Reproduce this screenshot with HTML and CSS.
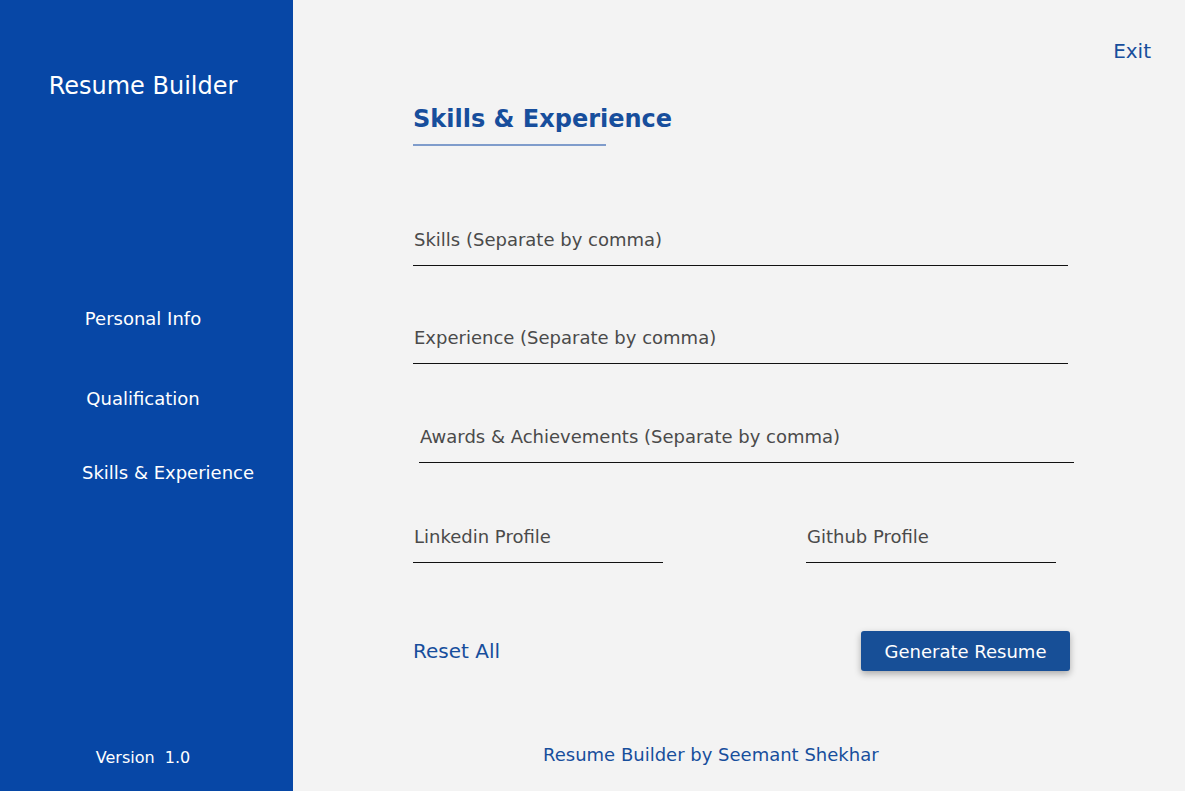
FILE: index.html
```html
<!DOCTYPE html>
<html lang="en">
<head>
<meta charset="utf-8">
<title>Resume Builder</title>
<link rel="stylesheet" href="styles.css">
</head>
<body>
<div class="app">
  <aside class="sidebar">
    <div class="brand">Resume Builder</div>
    <nav class="nav">
      <a class="nav-item nav-personal">Personal Info</a>
      <a class="nav-item nav-qual">Qualification</a>
      <a class="nav-item nav-skills">Skills &amp; Experience</a>
    </nav>
    <div class="version">Version&nbsp; 1.0</div>
  </aside>
  <main class="main">
    <div class="topbar"><a class="exit">Exit</a></div>
    <section class="content">
      <h1 class="heading">Skills &amp; Experience</h1>
      <div class="field field-wide field-first"><span class="label">Skills (Separate by comma)</span></div>
      <div class="field field-wide field-second"><span class="label">Experience (Separate by comma)</span></div>
      <div class="field field-wide field-shift"><span class="label">Awards &amp; Achievements (Separate by comma)</span></div>
      <div class="field-row">
        <div class="field field-half"><span class="label">Linkedin Profile</span></div>
        <div class="field field-half"><span class="label">Github Profile</span></div>
      </div>
      <div class="actions">
        <a class="reset">Reset All</a>
        <button class="generate">Generate Resume</button>
      </div>
    </section>
    <footer class="footer"><span class="credit">Resume Builder by Seemant Shekhar</span></footer>
  </main>
</div>
</body>
</html>
```
FILE: styles.css
```css
* { box-sizing: border-box; }
html, body { margin: 0; padding: 0; height: 100%; }
body {
  font-family: "DejaVu Sans", "Liberation Sans", sans-serif;
  background: #f3f3f3;
}
.app { display: flex; height: 791px; }
.sidebar {
  width: 293px;
  flex: none;
  background: #0747a6;
  color: #fff;
  display: flex;
  flex-direction: column;
  align-items: center;
  padding-right: 7px;
}
.brand {
  font-size: 24px;
  margin-top: 71px;
  line-height: 30px;
}
.nav {
  display: flex;
  flex-direction: column;
  align-items: center;
  margin-top: 206px;
}
.nav-item { font-size: 18px; line-height: 24px; display: block; }
.nav-qual { margin-top: 56px; }
.nav-skills { margin-top: 50px; margin-left: 50px; }
.version {
  margin-top: auto;
  margin-bottom: 23px;
  font-size: 16px;
  line-height: 20px;
}
.main {
  flex: 1;
  display: flex;
  flex-direction: column;
}
.topbar {
  display: flex;
  justify-content: flex-end;
  padding: 39px 34px 0 0;
}
.exit { color: #174e9c; font-size: 20px; line-height: 24px; }
.content {
  padding-left: 120px;
  width: 795px;
}
.heading {
  margin: 41px 0 0 0;
  font-size: 24px;
  line-height: 30px;
  color: #174e9c;
  font-weight: bold;
  display: inline-block;
  padding-bottom: 12px;
  position: relative;
}
.heading::after {
  content: "";
  position: absolute;
  left: 0;
  bottom: 0;
  width: 193px;
  height: 2px;
  background: #7f9ccb;
}
.field {
  border-bottom: 1px solid #111;
  padding: 0 0 13px 1px;
  color: #4a4a4a;
  font-size: 18px;
  line-height: 24px;
}
.field-wide { width: 655px; }
.field-first { margin-top: 82px; }
.field-second { margin-top: 60px; }
.field-shift { margin-left: 6px; margin-top: 61px; }
.field-row {
  display: flex;
  gap: 143px;
  margin-top: 62px;
}
.field-half { width: 250px; }
.actions {
  display: flex;
  justify-content: space-between;
  align-items: center;
  width: 657px;
  margin-top: 68px;
}
.reset { color: #174e9c; font-size: 20px; line-height: 24px; }
.generate {
  font-family: inherit;
  background: #174f97;
  color: #fff;
  border: none;
  border-radius: 3px;
  width: 209px;
  height: 40px;
  font-size: 18px;
  box-shadow: 0 3px 7px rgba(0,0,0,0.3);
}
.footer {
  margin-top: auto;
  padding: 0 0 25px 250px;
}
.credit {
  color: #174e9c;
  font-size: 18px;
  line-height: 22px;
}
```
